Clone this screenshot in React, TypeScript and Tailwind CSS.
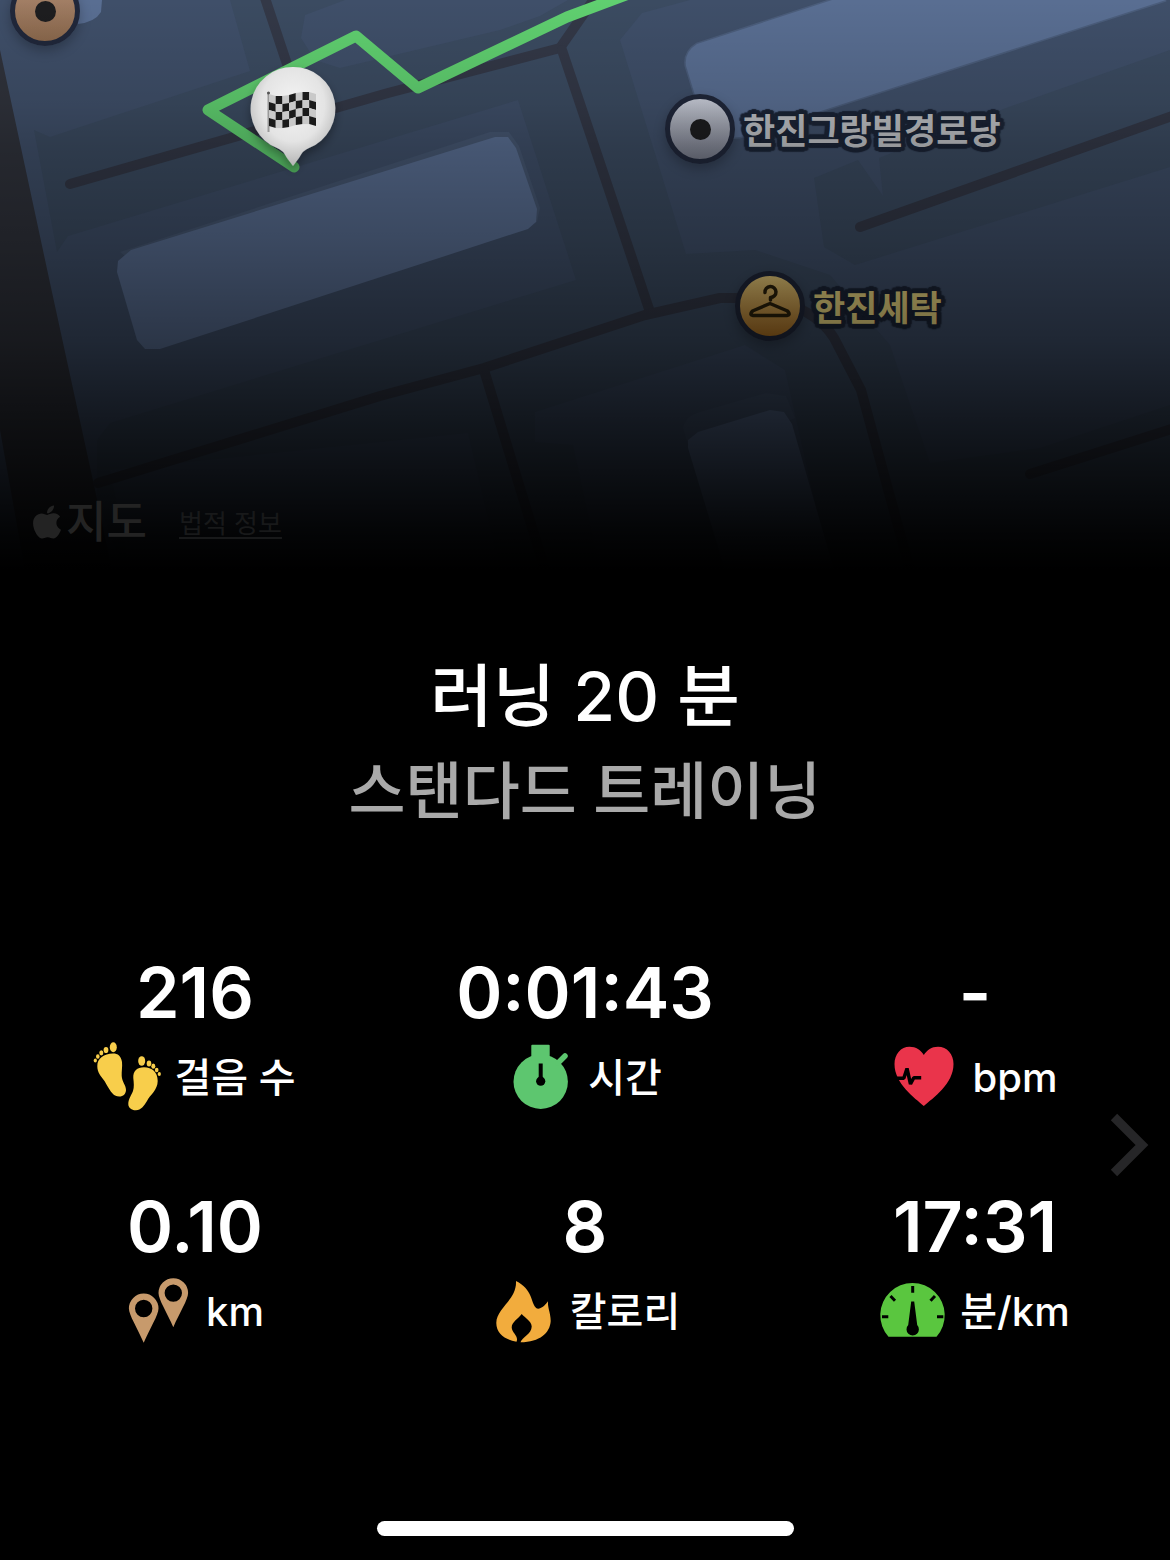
import React from "react";
import type { ReactNode } from "react";
import { FaApple } from "react-icons/fa";

const FLAG_TOP = [94, 96, 96, 95, 93, 92, 92, 94];

const FlagSquares = () => (
  <>
    {[0, 1, 2, 3].map((row) =>
      [0, 1, 2, 3, 4, 5, 6].map((col) => {
        const x = 269 + col * 6.7;
        const y1 = FLAG_TOP[col] + row * 8;
        const y2 = FLAG_TOP[col + 1] + row * 8;
        return (
          <polygon
            key={`${row}-${col}`}
            points={`${x},${y1} ${x + 6.8},${y2} ${x + 6.8},${y2 + 8.1} ${x},${y1 + 8.1}`}
            fill={(row + col) % 2 ? "#1b1b1b" : "#c9c9c9"}
          />
        );
      }),
    )}
  </>
);

const MapCanvas = () => (
  <svg
    className="block h-full w-full"
    viewBox="0 0 1170 570"
    preserveAspectRatio="xMidYMid slice"
    aria-hidden="true"
  >
    <defs>
      <radialGradient id="pin" cx="0.5" cy="0.38" r="0.62">
        <stop offset="0" stopColor="#f4f4f4" />
        <stop offset="0.6" stopColor="#e4e4e4" />
        <stop offset="1" stopColor="#b4b4b4" />
      </radialGradient>
      <filter id="soft" x="-30%" y="-30%" width="160%" height="160%">
        <feDropShadow dx="0" dy="5" stdDeviation="5" floodColor="#000" floodOpacity="0.35" />
      </filter>
    </defs>
    <rect width="1170" height="570" fill="#3b4b61" />

    {/* land parcels */}
    <g fill="#3f4f69">
      <path d="M0 0H230L250 71L50 137L34 130L57 252L68 236L518 100L576 280L110 423L97 440V500L124 570H0Z" />
      <path d="M305 15L345 0H568L540 16L500 30L340 68L315 60L301 38Z" />
      <path d="M620 40L642 13L690 0H1170V50L1006 108L879 158L883 196L858 160L814 178L824 247L855 265L1170 167V405L1040 448L930 463L890 345L830 275L755 250L686 254Z" />
      <path d="M535 412L745 345L785 370L830 570H600L573 445L535 442Z" />
      <path d="M110 470L468 433L500 570H130Z" />
    </g>

    <path d="M0 50L50 283L95 490L112 570H25L0 430Z" fill="#30333c" />

    {/* lanes */}
    <g fill="none" stroke="#333847" strokeWidth="10" strokeLinecap="round" strokeLinejoin="round">
      <path d="M70 184L388 93L560 48L592 2" />
      <path d="M562 50L650 312" />
      <path d="M264 -5L291 76" />
      <path d="M860 227L1175 115" />
      <path d="M1030 474L1175 428" />
      <path d="M98 483L380 396L484 368L645 315L720 298H765Q816 308 834 338L861 390L910 570" />
      <path d="M484 370L545 570" />
    </g>

    {/* buildings */}
    <g fill="#596e92">
      <path d="M60 0H102L101 12Q95 22 78 24Z" />
      <path d="M832 0H1166L740 137Q713 140 705 128L686 66Q684 52 697 44Z" stroke="#4b5d7b" strokeWidth="3" />
      <path d="M832 0H1166L740 137Q713 140 705 128L686 66Q684 52 697 44Z" />
      <path d="M120 252L490 132L509 132L519 146L540 208L537 222L500 230L130 260Z" fill="#465772" />
      <path d="M117 272L118 261L131 250L495 137H508L516 148L537 209L536 222L528 229L160 349L145 349L137 340Z" />
      <path d="M683 428Q685 416 700 412L766 393L786 396L795 418L700 460L689 448Z" fill="#445570" />
      <path d="M688 448V440L698 432L770 410L784 412L792 424L834 570H725Z" />
    </g>

    <path
      d="M294 167L208 110L356 36L418 88L567 17L650 -14"
      fill="none"
      stroke="#60d070"
      strokeWidth="11"
      strokeLinecap="round"
      strokeLinejoin="round"
    />
  </svg>
);

const FinishPin = () => (
  <svg
    className="absolute inset-0 h-full w-full"
    viewBox="0 0 1170 570"
    preserveAspectRatio="xMidYMid slice"
    role="img"
    aria-label="도착"
  >
    <g filter="url(#soft)">
      <path
        d="M293 67A42 42 0 0 1 309 148Q303 150 299 158L293 166L287 158Q283 150 277 148A42 42 0 0 1 293 67Z"
        fill="url(#pin)"
      />
    </g>
    <path d="M268.500 92V132" stroke="#999" strokeWidth="2" />
    <circle cx="268.500" cy="93" r="1.500" fill="#555" />
    <FlagSquares />
  </svg>
);

type PlaceProps = {
  label?: string;
  className: string;
  discClass: string;
  labelClass?: string;
  children: ReactNode;
};

const Place = ({ label, className, discClass, labelClass, children }: PlaceProps) => (
  <div className={`absolute flex items-center gap-2 ${className}`}>
    <span
      className={`flex size-[70px] shrink-0 items-center justify-center rounded-full border-5 border-[#20273a] bg-linear-to-b bg-origin-border shadow-[0_5px_12px_rgba(0,0,0,0.25)] ${discClass}`}
    >
      {children}
    </span>
    {label && (
      <span
        className={`pt-1 text-[35px] leading-10 font-bold whitespace-nowrap [text-shadow:5px_0_1px_#1c2537,4px_3px_1px_#1c2537,3px_4px_1px_#1c2537,0_5px_1px_#1c2537,-3px_4px_1px_#1c2537,-4px_3px_1px_#1c2537,-5px_0_1px_#1c2537,-4px_-3px_1px_#1c2537,-3px_-4px_1px_#1c2537,0_-5px_1px_#1c2537,3px_-4px_1px_#1c2537,4px_-3px_1px_#1c2537] ${labelClass}`}
      >
        {label}
      </span>
    )}
  </div>
);

const Dot = () => <span className="size-[21px] rounded-full bg-[#1d1d1f]" />;

const HangerIcon = () => (
  <svg
    className="size-11 shrink-0"
    viewBox="0 0 44 44"
    fill="none"
    stroke="#2b210b"
    strokeWidth="3.500"
    strokeLinecap="round"
    strokeLinejoin="round"
    aria-hidden="true"
  >
    <path d="M17 8.500A5.500 5.500 0 1 1 22.500 13.500V16" />
    <path d="M22 19.500L39.500 27Q43 31 39 31.500H5Q1 31 4.500 27Z" />
  </svg>
);

const StepsIcon = () => (
  <g fill="#f8ce4b">
    <path d="M19 7.500C10 8 3.300 12 3.300 20C3.300 27 7 30 10.500 35C14 41 17 47 21 49.500C27 52.500 32 49 32 44C32 39 28 36 27.700 30C27.500 25 28.500 21 28 16C27 10 24 7.500 19 7.500Z" />
    <ellipse cx="19.300" cy="1.300" rx="3.500" ry="5" />
    <ellipse cx="12" cy="4" rx="2.400" ry="3.100" />
    <ellipse cx="7.300" cy="6.800" rx="2" ry="2.600" />
    <ellipse cx="3.800" cy="10.500" rx="1.800" ry="2.200" />
    <ellipse cx="1.300" cy="14.500" rx="1.600" ry="1.900" />
    <path d="M50 21.300C43 21.300 39 25 39.300 32C39.800 37 40.300 41 39 45C37.500 49 34.300 53 34.300 58C34.300 62 38 64.500 42 64.300C47 64 50 60 53 55C56 49 63.700 44 63.700 35C63.700 26 58 21.300 50 21.300Z" />
    <ellipse cx="47.700" cy="15" rx="3.500" ry="4.800" />
    <ellipse cx="55" cy="17.500" rx="2.300" ry="3" />
    <ellipse cx="59.300" cy="20.200" rx="2" ry="2.600" />
    <ellipse cx="62.700" cy="24" rx="1.800" ry="2.200" />
    <ellipse cx="65.300" cy="28" rx="1.600" ry="2" />
  </g>
);

const TimeIcon = () => (
  <>
    <g fill="#5dc66f">
      <circle cx="32.700" cy="35.700" r="27.200" />
      <rect x="23.300" y="-1.300" width="18.400" height="16" rx="1" />
      <path d="M50 17L57 10" stroke="#5dc66f" strokeWidth="5.500" strokeLinecap="round" />
    </g>
    <path d="M32.700 17.500V33" stroke="#000" strokeWidth="4" />
    <circle cx="32.700" cy="35.200" r="4.600" />
  </>
);

const HeartIcon = () => (
  <>
    <path
      d="M30.800 60C22 52 1.500 38 1.500 18C1.500 8 8 .7 16.500 .7C23 .7 28 4 30.800 9C34 4 38.500 .7 45 .7C54 .7 60.500 8 60.500 18C60.500 38 40 52 30.800 60Z"
      fill="#ea344b"
    />
    <path
      d="M3 32.300H10.800L14 22.500L17.500 38L20.800 31.700H28.200"
      fill="none"
      stroke="#000"
      strokeWidth="3.500"
      strokeLinejoin="bevel"
    />
  </>
);

const DistanceIcon = () => (
  <g fill="#c79a6c" fillRule="evenodd">
    <path d="M17.700 13.600A14.800 14.800 0 0 1 32.500 28.400C32.500 35 24 48 17.700 62.700C11.500 48 2.900 35 2.900 28.400A14.800 14.800 0 0 1 17.700 13.600ZM17.700 19.800A8.700 8.700 0 1 0 17.700 37.200A8.700 8.700 0 1 0 17.700 19.800Z" />
    <path d="M47.300 -1.800A14.800 14.800 0 0 1 62.100 13C62.100 19.600 53.600 32.600 47.300 47.300C41.100 32.600 32.500 19.600 32.500 13A14.800 14.800 0 0 1 47.300 -1.800ZM47.300 4.400A8.700 8.700 0 1 0 47.300 21.800A8.700 8.700 0 1 0 47.300 4.400Z" />
  </g>
);

const FlameIcon = () => (
  <path
    d="M26 1C34 5 38 10 40.500 16C43 22 44 28.700 48.500 28.700C53 28 56 24 58 21.300C57.500 28 60.700 33 60.700 41C60 53 50 62 30.500 62.300C32 57 41.700 54 41.700 46.500C41.500 41 35 38 31.700 34C28 39 21.700 42 21.700 47.500C22 53 29 56 26.500 61.700C16 60 6.300 54 6.300 43C6.500 28 27 20 26 1Z"
    fill="#f2ac3d"
  />
);

const PaceIcon = () => (
  <>
    <path d="M8.500 56.700A32.200 32.200 0 1 1 56.500 56.700Z" fill="#5ac63f" />
    <path
      d="M32.700 6V12.700M2 36.700H8.300M57 36.700H63.300M10.500 16L15 20.700M55 16L50.500 20.700"
      stroke="#000"
      strokeWidth="3"
    />
    <path d="M31.200 21.500H34.200L37.200 45A6.200 6.200 0 1 1 28.200 45Z" fill="#000" />
  </>
);

type Stat = { value: string; unit: string; icon: ReactNode };

const stats: Stat[] = [
  { value: "216", unit: "걸음 수", icon: <StepsIcon /> },
  { value: "0:01:43", unit: "시간", icon: <TimeIcon /> },
  { value: "-", unit: "bpm", icon: <HeartIcon /> },
  { value: "0.10", unit: "km", icon: <DistanceIcon /> },
  { value: "8", unit: "칼로리", icon: <FlameIcon /> },
  { value: "17:31", unit: "분/km", icon: <PaceIcon /> },
];

const StatItem = ({ value, unit, icon }: Stat) => (
  <li className="flex flex-col items-center">
    <span className="text-[70px] leading-20 font-semibold">{value}</span>
    <span className="flex h-[90px] items-center gap-4">
      <svg className="size-16 overflow-visible" viewBox="0 0 64 64" aria-hidden="true">
        {icon}
      </svg>
      <span className="text-[40px] leading-12 font-medium">{unit}</span>
    </span>
  </li>
);

const App = () => {
  return (
    <main className="flex min-h-screen flex-col overflow-hidden bg-black font-[Inter,'Noto_Sans_CJK_KR',sans-serif] text-white">
      <section className="relative h-[570px] overflow-hidden" aria-label="지도">
        <MapCanvas />
        <Place className="-top-6 left-[10px]" discClass="from-[#b08c74] to-[#876549]">
          <Dot />
        </Place>
        <Place
          className="top-[94px] left-[665px]"
          discClass="from-[#d5d9e4] to-[#6d7180]"
          label="한진그랑빌경로당"
          labelClass="text-[#bfc1c5]"
        >
          <Dot />
        </Place>
        <Place
          className="top-[271px] left-[735px]"
          discClass="from-[#f0d682] to-[#a86a17]"
          label="한진세탁"
          labelClass="text-[#f0dc84]"
        >
          <HangerIcon />
        </Place>
        <div className="absolute inset-0 bg-[linear-gradient(to_bottom,rgba(0,0,0,0)_0%,rgba(0,0,0,0.12)_18%,rgba(0,0,0,0.22)_26%,rgba(0,0,0,0.34)_42%,rgba(0,0,0,0.51)_60%,rgba(0,0,0,0.7)_74%,rgba(0,0,0,0.85)_86%,rgba(0,0,0,0.95)_94%,#000_100%)]" />
        <FinishPin />
        <div className="absolute bottom-6 left-7 flex items-center gap-8">
          <span className="flex items-center text-[44px] leading-12 font-medium text-[#232323]">
            <FaApple className="size-[38px]" aria-hidden="true" />
            지도
          </span>
          <a href="#legal" className="pt-1 text-[26px] leading-8 text-[#18191a] underline underline-offset-4">
            법적 정보
          </a>
        </div>
      </section>

      <header className="pt-[78px] text-center font-medium">
        <h1 className="text-[68px] leading-24">러닝 20 분</h1>
        <p className="text-[62px] leading-24 text-[#a9a9a9]">스탠다드 트레이닝</p>
      </header>

      <section className="relative mt-[113px]" aria-label="운동 기록">
        <ul className="grid grid-cols-3 gap-y-16">
          {stats.map((stat) => (
            <StatItem key={stat.unit} {...stat} />
          ))}
        </ul>
        <button type="button" aria-label="다음" className="absolute top-40 right-5">
          <svg className="h-16 w-10" viewBox="0 0 40 64" fill="none" stroke="#262628" strokeWidth="9">
            <path d="M4 4L32 32L4 60" />
          </svg>
        </button>
      </section>

      <div className="mx-auto mt-auto mb-6 h-[15px] w-[417px] max-w-full rounded-full bg-white" />
    </main>
  );
};

export default App;
